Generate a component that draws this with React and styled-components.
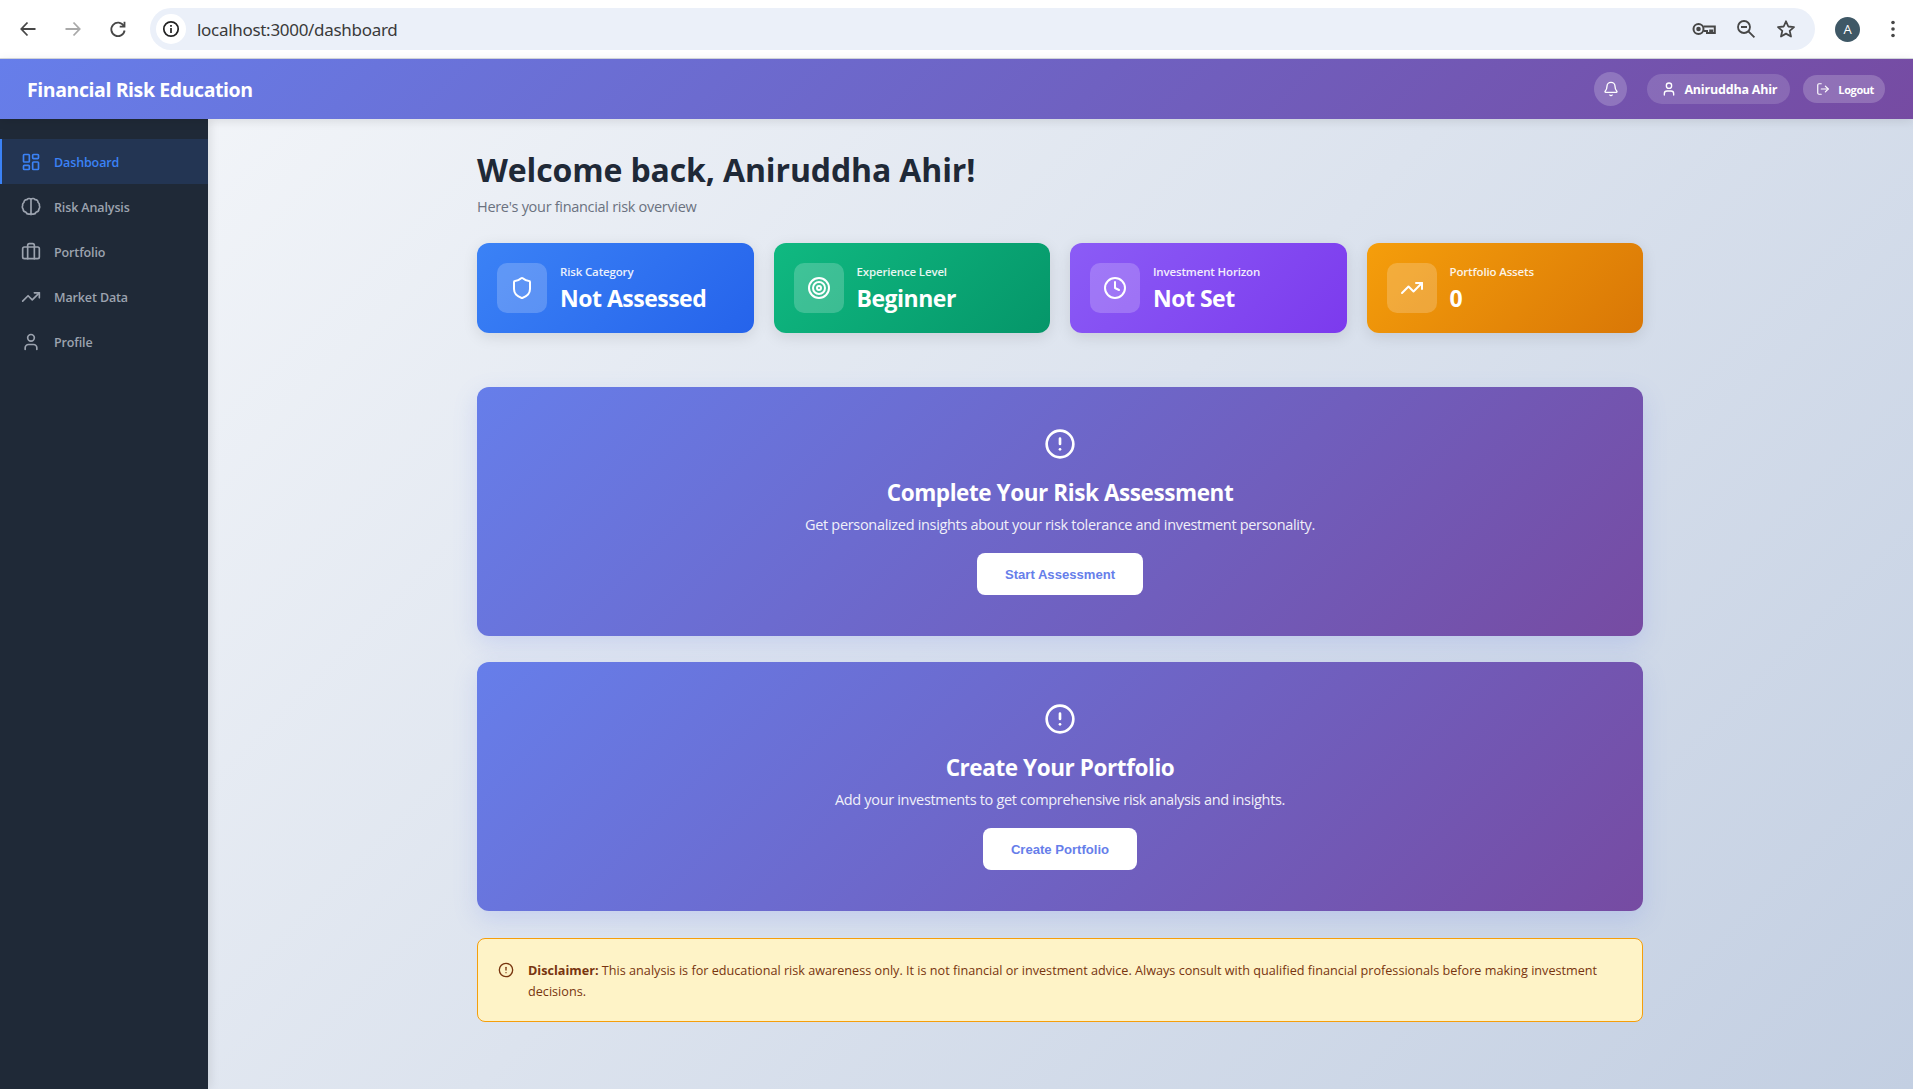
import React from "react";
import styled, { createGlobalStyle } from "styled-components";
import {
  AlertCircle,
  Bell,
  Briefcase,
  Clock,
  LayoutDashboard,
  LogOut,
  Shield,
  Target,
  TrendingUp,
  User,
} from "lucide-react";

const GlobalStyle = createGlobalStyle`
  html, body {
    margin: 0;
    padding: 0;
    height: 100%;
    overflow: hidden;
    background: #fff;
  }
  * {
    box-sizing: border-box;
  }
  #root {
    height: 100%;
  }
`;

const FONT = `"Open Sans", "Noto Sans", sans-serif`;

const Page = styled.div`
  width: 1913px;
  height: 1089px;
  display: flex;
  flex-direction: column;
  font-family: ${FONT};
`;

/* browser chrome */
const BrowserBar = styled.div`
  height: 59px;
  flex-shrink: 0;
  display: flex;
  align-items: center;
  padding: 0 4px 0 12px;
  background: #fff;
  border-bottom: 1px solid #d5d9df;
`;

const ChromeButton = styled.div`
  width: 32px;
  height: 32px;
  margin-right: ${(p) => p.$gap ?? 13}px;
  display: flex;
  align-items: center;
  justify-content: center;
  color: ${(p) => (p.$off ? "#a9a9a9" : "#474747")};
`;

const AddressBar = styled.div`
  flex: 1;
  height: 42px;
  margin: 0 20px 0 0;
  padding: 0 19px 0 6px;
  display: flex;
  align-items: center;
  border-radius: 21px;
  background: #ebf0f9;
`;

const SiteInfo = styled.div`
  width: 30px;
  height: 30px;
  border-radius: 50%;
  background: #fff;
  display: flex;
  align-items: center;
  justify-content: center;
  color: #222;
`;

const Url = styled.span`
  margin-left: 11px;
  flex: 1;
  font-family: "Noto Sans", sans-serif;
  font-size: 17px;
  letter-spacing: -0.3px;
  color: #3a3a3a;
`;

const AddressIcons = styled.div`
  display: flex;
  align-items: center;
  gap: 20px;
  color: #474747;
`;

const Avatar = styled.div`
  width: 25px;
  height: 25px;
  margin-right: 17px;
  border-radius: 50%;
  background: #3f5866;
  color: #fff;
  font-size: 13px;
  display: flex;
  align-items: center;
  justify-content: center;
`;

/* app header */
const Header = styled.header`
  height: 60px;
  flex-shrink: 0;
  position: relative;
  z-index: 2;
  display: flex;
  align-items: center;
  justify-content: space-between;
  padding: 0 28px 0 27px;
  background: linear-gradient(135deg, #667eea 0%, #764ba2 100%);
  box-shadow: 0 2px 10px rgba(0, 0, 0, 0.1);
  color: #fff;
`;

const Brand = styled.h1`
  margin: 0;
  font-size: 19.5px;
  font-weight: 700;
  letter-spacing: -0.42px;
`;

const HeaderActions = styled.div`
  display: flex;
  align-items: center;
`;

const BellButton = styled.div`
  width: 33px;
  height: 34px;
  margin-right: 20px;
  border-radius: 50%;
  background: rgba(255, 255, 255, 0.2);
  display: flex;
  align-items: center;
  justify-content: center;
`;

const UserPill = styled.div`
  height: 30px;
  padding: 0 13px 0 14px;
  margin-right: 13px;
  border-radius: 15px;
  background: rgba(255, 255, 255, 0.15);
  display: flex;
  align-items: center;
  gap: 7px;
  font-size: 12.5px;
  font-weight: 700;
  letter-spacing: -0.2px;
`;

const LogoutPill = styled.div`
  height: 28px;
  padding: 0 11px 0 13px;
  border-radius: 14px;
  background: rgba(255, 255, 255, 0.2);
  display: flex;
  align-items: center;
  gap: 8px;
  font-size: 11px;
  font-weight: 700;
  letter-spacing: -0.4px;
`;

/* body */
const Body = styled.div`
  flex: 1;
  min-height: 0;
  display: flex;
  background: linear-gradient(135deg, #f5f7fa 0%, #c3cfe2 100%);
`;

const Sidebar = styled.nav`
  width: 208px;
  flex-shrink: 0;
  padding-top: 20px;
  background: #1f2937;
  box-shadow: 2px 0 10px rgba(0, 0, 0, 0.1);
`;

const NavItem = styled.div`
  height: 45px;
  padding-left: ${(p) => (p.$active ? 19 : 21)}px;
  display: flex;
  align-items: center;
  gap: 13px;
  border-left: ${(p) => (p.$active ? "2px solid #3b82f6" : "none")};
  background: ${(p) => (p.$active ? "rgba(59, 130, 246, 0.15)" : "transparent")};
  color: ${(p) => (p.$active ? "#3b82f6" : "#9ca3af")};
  font-size: 12.5px;
  font-weight: 600;
  letter-spacing: -0.12px;
`;

const NavLabel = styled.span`
  padding-top: 1px;
`;

const Main = styled.main`
  flex: 1;
  min-width: 0;
  padding: 29px 1px 0 0;
  display: flex;
  flex-direction: column;
  align-items: center;
`;

const Content = styled.div`
  width: 1166px;
`;

const Title = styled.h2`
  margin: 0;
  font-size: 32px;
  line-height: 44px;
  font-weight: 700;
  letter-spacing: -0.13px;
  color: #1f2937;
`;

const Subtitle = styled.p`
  margin: 5px 0 0;
  font-size: 14.5px;
  line-height: 20px;
  letter-spacing: -0.3px;
  color: #6b7280;
`;

const StatGrid = styled.div`
  margin-top: 26px;
  display: grid;
  grid-template-columns: repeat(4, 1fr);
  gap: 20px;
`;

const StatCard = styled.div`
  height: 90px;
  padding: 0 20px;
  display: flex;
  align-items: center;
  gap: 13px;
  border-radius: 12px;
  color: #fff;
  background: linear-gradient(135deg, ${(p) => p.$from} 0%, ${(p) => p.$to} 100%);
  box-shadow: 0 4px 15px rgba(0, 0, 0, 0.1);
`;

const StatIcon = styled.div`
  width: 50px;
  height: 50px;
  flex-shrink: 0;
  border-radius: 10px;
  background: rgba(255, 255, 255, 0.2);
  display: flex;
  align-items: center;
  justify-content: center;
`;

const StatLabel = styled.div`
  font-size: 11.5px;
  line-height: 16px;
  font-weight: 600;
  letter-spacing: -0.15px;
  opacity: 0.9;
`;

const StatValue = styled.div`
  margin-top: 3px;
  font-size: 23px;
  line-height: 30px;
  font-weight: 700;
  letter-spacing: -0.5px;
`;

const Prompt = styled.section`
  height: 249px;
  margin-top: ${(p) => p.$top}px;
  padding-top: 41px;
  display: flex;
  flex-direction: column;
  align-items: center;
  border-radius: 12px;
  color: #fff;
  background: linear-gradient(135deg, #667eea 0%, #764ba2 100%);
  box-shadow: 0 8px 25px rgba(102, 126, 234, 0.2);
`;

const PromptTitle = styled.h3`
  margin: 17px 0 0;
  font-size: 22.5px;
  line-height: 32px;
  font-weight: 700;
  letter-spacing: -0.42px;
`;

const PromptText = styled.p`
  margin: 6px 0 0;
  font-size: 14.5px;
  line-height: 20px;
  letter-spacing: -0.32px;
  opacity: 0.9;
`;

const PromptButton = styled.button`
  height: 42px;
  margin-top: 18px;
  padding: 0 28px;
  border: none;
  border-radius: 8px;
  background: #fff;
  color: #667eea;
  font-family: "Liberation Sans", Arial, sans-serif;
  font-size: 13.1px;
  font-weight: 700;
`;

const Disclaimer = styled.div`
  margin-top: 27px;
  height: 84px;
  padding: 0 20px;
  display: flex;
  align-items: flex-start;
  gap: 14px;
  border: 1px solid #f59e0b;
  border-radius: 8px;
  background: #fef3c7;
  color: #78350f;
  font-size: 12.65px;
  line-height: 21px;
`;

const DisclaimerText = styled.p`
  margin: 21px 0 0;
  strong {
    font-weight: 700;
  }
`;

const DisclaimerIcon = styled.div`
  margin-top: 23px;
  flex-shrink: 0;
  display: flex;
`;

const RiskIcon = () => (
  <svg width="20" height="20" viewBox="0 0 24 24" fill="none" stroke="currentColor" strokeWidth="2" strokeLinecap="round" strokeLinejoin="round">
    <path d="M12 2.500c-1.500-1-4-.8-5 .7-2-.1-3.500 1.300-3.500 3.300-1.300 1-1.800 2.300-1.500 3.700-.7 1.500-.5 3 .5 4.300 0 2 1.300 3.500 3.300 3.700.8 2 3 3 6.200 1.800 3.200 1.200 5.400.2 6.200-1.800 2-.2 3.300-1.700 3.300-3.700 1-1.300 1.200-2.800.5-4.300.3-1.400-.2-2.700-1.500-3.700 0-2-1.500-3.400-3.500-3.300-1-1.500-3.500-1.700-5-.7z" />
    <path d="M12 2.500v18.800" />
  </svg>
);

const NAV = [
  { label: "Dashboard", icon: <LayoutDashboard size={20} />, active: true },
  { label: "Risk Analysis", icon: <RiskIcon /> },
  { label: "Portfolio", icon: <Briefcase size={20} /> },
  { label: "Market Data", icon: <TrendingUp size={20} /> },
  { label: "Profile", icon: <User size={20} /> },
];

const STATS = [
  { label: "Risk Category", value: "Not Assessed", from: "#3b82f6", to: "#2563eb", icon: <Shield size={24} /> },
  { label: "Experience Level", value: "Beginner", from: "#10b981", to: "#059669", icon: <Target size={24} /> },
  { label: "Investment Horizon", value: "Not Set", from: "#8b5cf6", to: "#7c3aed", icon: <Clock size={24} /> },
  { label: "Portfolio Assets", value: "0", from: "#f59e0b", to: "#d97706", icon: <TrendingUp size={24} /> },
];

const BrowserBack = ({ forward }) => (
  <svg width="20" height="20" viewBox="0 0 20 20" fill="none" stroke="currentColor" strokeWidth="1.8">
    {forward ? <path d="M2.500 10h14M10.500 3.500l6.200 6.500-6.200 6.500" /> : <path d="M17.500 10h-14M9.500 3.500L3.300 10l6.200 6.500" />}
  </svg>
);

const BrowserReload = () => (
  <svg width="20" height="20" viewBox="0 0 20 20" fill="none" stroke="currentColor" strokeWidth="1.8">
    <path d="M15.800 7A6.700 6.700 0 1 0 16.600 11.500" />
    <path d="M16.500 2.800V7.600H11.700" />
  </svg>
);

const BrowserInfo = () => (
  <svg width="18" height="18" viewBox="0 0 18 18" fill="none" stroke="currentColor" strokeWidth="1.7">
    <circle cx="9" cy="9" r="7.200" />
    <path d="M9 8v5M9 5v1.700" />
  </svg>
);

const BrowserKey = () => (
  <svg width="24" height="16" viewBox="0 0 24 16" fill="none" stroke="currentColor" strokeWidth="2">
    <circle cx="6.500" cy="8" r="5" />
    <circle cx="6.500" cy="8" r="1.300" fill="currentColor" />
    <path d="M11.500 5.500h11.300v6.500h-2.600v-2.500h-2V12H15V10h-3.500" />
  </svg>
);

const BrowserZoom = () => (
  <svg width="20" height="20" viewBox="0 0 20 20" fill="none" stroke="currentColor" strokeWidth="1.8">
    <circle cx="8" cy="8" r="6" />
    <path d="M12.400 12.400L18.400 18.400M5 8h6" />
  </svg>
);

const BrowserStar = () => (
  <svg width="20" height="20" viewBox="0 0 20 20" fill="none" stroke="currentColor" strokeWidth="1.8" strokeLinejoin="round">
    <path d="M10 2.300l2.300 5.200 5.700.6-4.300 3.800 1.300 5.600-5-2.900-5 2.900 1.300-5.600L2 8.100l5.700-.6z" />
  </svg>
);

const BrowserMenu = () => (
  <svg width="6" height="20" viewBox="0 0 6 20" fill="currentColor">
    <circle cx="3" cy="3.500" r="1.800" />
    <circle cx="3" cy="10" r="1.800" />
    <circle cx="3" cy="16.500" r="1.800" />
  </svg>
);

const PromptCard = ({ top, title, text, action }) => (
  <Prompt $top={top}>
    <AlertCircle size={32} strokeWidth={2} />
    <PromptTitle>{title}</PromptTitle>
    <PromptText>{text}</PromptText>
    <PromptButton>{action}</PromptButton>
  </Prompt>
);

export default function App() {
  return (
    <Page>
      <GlobalStyle />
      <BrowserBar>
        <ChromeButton><BrowserBack /></ChromeButton>
        <ChromeButton $off><BrowserBack forward /></ChromeButton>
        <ChromeButton $gap={16}><BrowserReload /></ChromeButton>
        <AddressBar>
          <SiteInfo><BrowserInfo /></SiteInfo>
          <Url>localhost:3000/dashboard</Url>
          <AddressIcons>
            <BrowserKey />
            <BrowserZoom />
            <BrowserStar />
          </AddressIcons>
        </AddressBar>
        <Avatar>A</Avatar>
        <ChromeButton $gap={0}><BrowserMenu /></ChromeButton>
      </BrowserBar>

      <Header>
        <Brand>Financial Risk Education</Brand>
        <HeaderActions>
          <BellButton><Bell size={16} /></BellButton>
          <UserPill><User size={16} />Aniruddha Ahir</UserPill>
          <LogoutPill><LogOut size={14} />Logout</LogoutPill>
        </HeaderActions>
      </Header>

      <Body>
        <Sidebar>
          {NAV.map((item) => (
            <NavItem key={item.label} $active={item.active}>
              {item.icon}
              <NavLabel>{item.label}</NavLabel>
            </NavItem>
          ))}
        </Sidebar>
        <Main>
          <Content>
            <Title>Welcome back, Aniruddha Ahir!</Title>
            <Subtitle>Here's your financial risk overview</Subtitle>
            <StatGrid>
              {STATS.map((s) => (
                <StatCard key={s.label} $from={s.from} $to={s.to}>
                  <StatIcon>{s.icon}</StatIcon>
                  <div>
                    <StatLabel>{s.label}</StatLabel>
                    <StatValue>{s.value}</StatValue>
                  </div>
                </StatCard>
              ))}
            </StatGrid>
            <PromptCard
              top={54}
              title="Complete Your Risk Assessment"
              text="Get personalized insights about your risk tolerance and investment personality."
              action="Start Assessment"
            />
            <PromptCard
              top={26}
              title="Create Your Portfolio"
              text="Add your investments to get comprehensive risk analysis and insights."
              action="Create Portfolio"
            />
            <Disclaimer>
              <DisclaimerIcon><AlertCircle size={16} /></DisclaimerIcon>
              <DisclaimerText>
                <strong>Disclaimer:</strong> This analysis is for educational risk awareness only. It is not financial or investment advice. Always consult with qualified financial professionals before making investment decisions.
              </DisclaimerText>
            </Disclaimer>
          </Content>
        </Main>
      </Body>
    </Page>
  );
}
